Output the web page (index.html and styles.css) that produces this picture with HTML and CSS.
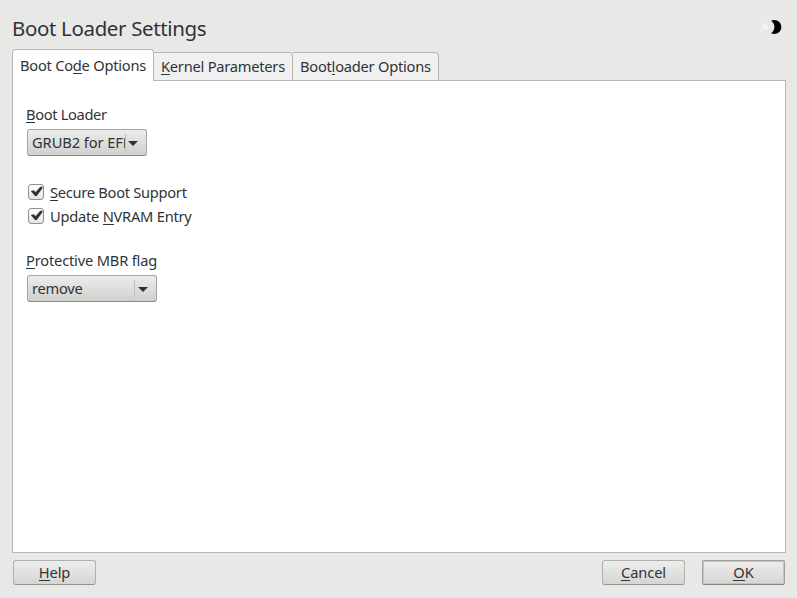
FILE: index.html
```html
<!DOCTYPE html>
<html lang="en">
<head>
<meta charset="utf-8">
<title>Boot Loader Settings</title>
<link rel="stylesheet" href="styles.css">
</head>
<body>
<header class="header">
  <h1 class="title">Boot Loader Settings</h1>
  <svg class="theme" width="26" height="18" viewBox="0 0 26 18">
    <g stroke="#f1f1f0" stroke-width="1" fill="#f3f3f3">
      <circle cx="8" cy="9" r="2.8"/>
      <path d="M8 2v2M8 14v2M1 9h2M3 4l1.300 1.300M3 14l1.300-1.300M13 4l-1.300 1.300M13 14l-1.300-1.300M13 9h2"/>
    </g>
    <path d="M14 2.700C19.500.5 24.300 4.200 24.300 9S19.500 17.500 14 15.300C18.600 12.500 18.600 5.500 14 2.700z" fill="#000"/>
  </svg>
</header>
<nav class="tabs">
  <div class="tab active"><span>Boot Co<u>d</u>e Options</span></div>
  <div class="tab kernel"><span><u>K</u>ernel Parameters</span></div>
  <div class="tab loader"><span>Boot<u>l</u>oader Options</span></div>
</nav>
<main class="panel">
  <label class="label l-boot"><u>B</u>oot Loader</label>
  <div class="combo grub"><span class="value">GRUB2 for EF<span class="plain-i">I</span></span><i class="sep"></i><svg class="arrow" width="10" height="5"><path d="M0 0h10L5 5z"/></svg></div>
  <div class="checks">
    <div class="check secure"><span class="box"><svg width="14" height="14" viewBox="0 0 14 14"><path d="M1.800 6l3-.7L6.500 7.200 11.300 1.800H13.500v1.500L7.700 11H6z"/></svg></span><span><u>S</u>ecure Boot Support</span></div>
    <div class="check"><span class="box"><svg width="14" height="14" viewBox="0 0 14 14"><path d="M1.800 6l3-.7L6.500 7.200 11.300 1.800H13.500v1.500L7.700 11H6z"/></svg></span><span>Update <u>N</u>VRAM Entry</span></div>
  </div>
  <label class="label l-mbr"><u>P</u>rotective MBR flag</label>
  <div class="combo mbr"><span class="value">remove</span><i class="sep"></i><svg class="arrow" width="10" height="5"><path d="M0 0h10L5 5z"/></svg></div>
</main>
<footer class="footer">
  <button class="btn"><span><u>H</u>elp</span></button>
  <button class="btn cancel"><span><u>C</u>ancel</span></button>
  <button class="btn ok"><span><u>O</u>K</span></button>
</footer>
</body>
</html>
```
FILE: styles.css
```css
* { box-sizing: border-box; }
body {
  margin: 0;
  width: 797px;
  height: 598px;
  padding: 0 11px 0 12px;
  display: flex;
  flex-direction: column;
  overflow: hidden;
  background: #e8e8e6;
  color: #2e3436;
  font: 14.67px/20px "Noto Sans", sans-serif;
  letter-spacing: -.24px;
  white-space: nowrap;
}
u { text-decoration: none; box-shadow: 0 1px 0 #2e3436; display: inline-block; height: 18px; line-height: 20px; }
.header { height: 49px; display: flex; justify-content: space-between; padding-top: 14px; }
.title { margin: 0; font-size: 20.5px; line-height: 29px; font-weight: 400; letter-spacing: -.36px; }
.theme { margin: 4px 3px 0 0; }
.tabs { height: 32px; display: flex; align-items: flex-end; margin-bottom: -1px; position: relative; }
.tab { height: 29px; border: 1px solid #b6b6b3; border-left: 0; border-radius: 0 4px 0 0; background: #f0f0f0; padding: 3px 0 0 7px; }
.active { height: 32px; width: 142px; border-left: 1px solid #b6b6b3; border-bottom: 0; border-radius: 4px 4px 0 0; background: #fff; padding: 5px 0 0 7px; }
.kernel { width: 139px; }
.loader { width: 146px; }
.panel { height: 473px; border: 1px solid #b6b6b3; background: #fff; padding: 23px 13px; display: flex; flex-direction: column; align-items: flex-start; }
.label { height: 25px; }
.l-boot { letter-spacing: -.34px; }
.l-mbr { letter-spacing: -.18px; }
.combo { height: 27px; margin-left: 1px; border: 1px solid #a5a5a1; border-bottom-color: #888884; border-radius: 3px; background: linear-gradient(#ececeb, #d0d0ce); display: flex; align-items: center; padding-left: 4px; }
.value { margin-top: -2px; }
.mbr .value { margin-top: -1px; }
.grub { width: 120px; }
.grub .value { width: 94px; letter-spacing: -.08px; }
.plain-i { font-family: "Open Sans", sans-serif; line-height: 1; }
.mbr { width: 130px; }
.sep { width: 1px; height: 17px; background: #bdbdba; margin-left: auto; }
.arrow { fill: #2e3436; margin: 1px 8px 0 3px; flex: none; }
.grub .sep { margin-left: -1px; }
.grub .arrow { margin-left: 2px; }
.checks { margin: 24px 0 22px 2px; }
.check { height: 24px; display: flex; align-items: center; gap: 6px; }
.secure { letter-spacing: -.28px; }
.box { width: 16px; height: 16px; margin-top: -1px; border: 1px solid #92928e; border-radius: 3px; background: linear-gradient(#fff, #e4e4e2); display: flex; }
.box svg { fill: #2e3436; }
.footer { display: flex; padding: 7px 1px 0; }
.btn { width: 83px; height: 25px; border: 1px solid #b0b0ac; border-bottom-color: #92928f; border-radius: 3px; background: linear-gradient(#ededec, #d5d5d3); color: inherit; font: inherit; letter-spacing: -.1px; padding: 0 0 1px; }
.cancel { margin-left: auto; }
.ok { margin-left: 17px; border-color: #a0a09c; border-bottom-color: #858581; box-shadow: inset 0 0 0 1px #c4c4c1; border-radius: 2px; }
```
